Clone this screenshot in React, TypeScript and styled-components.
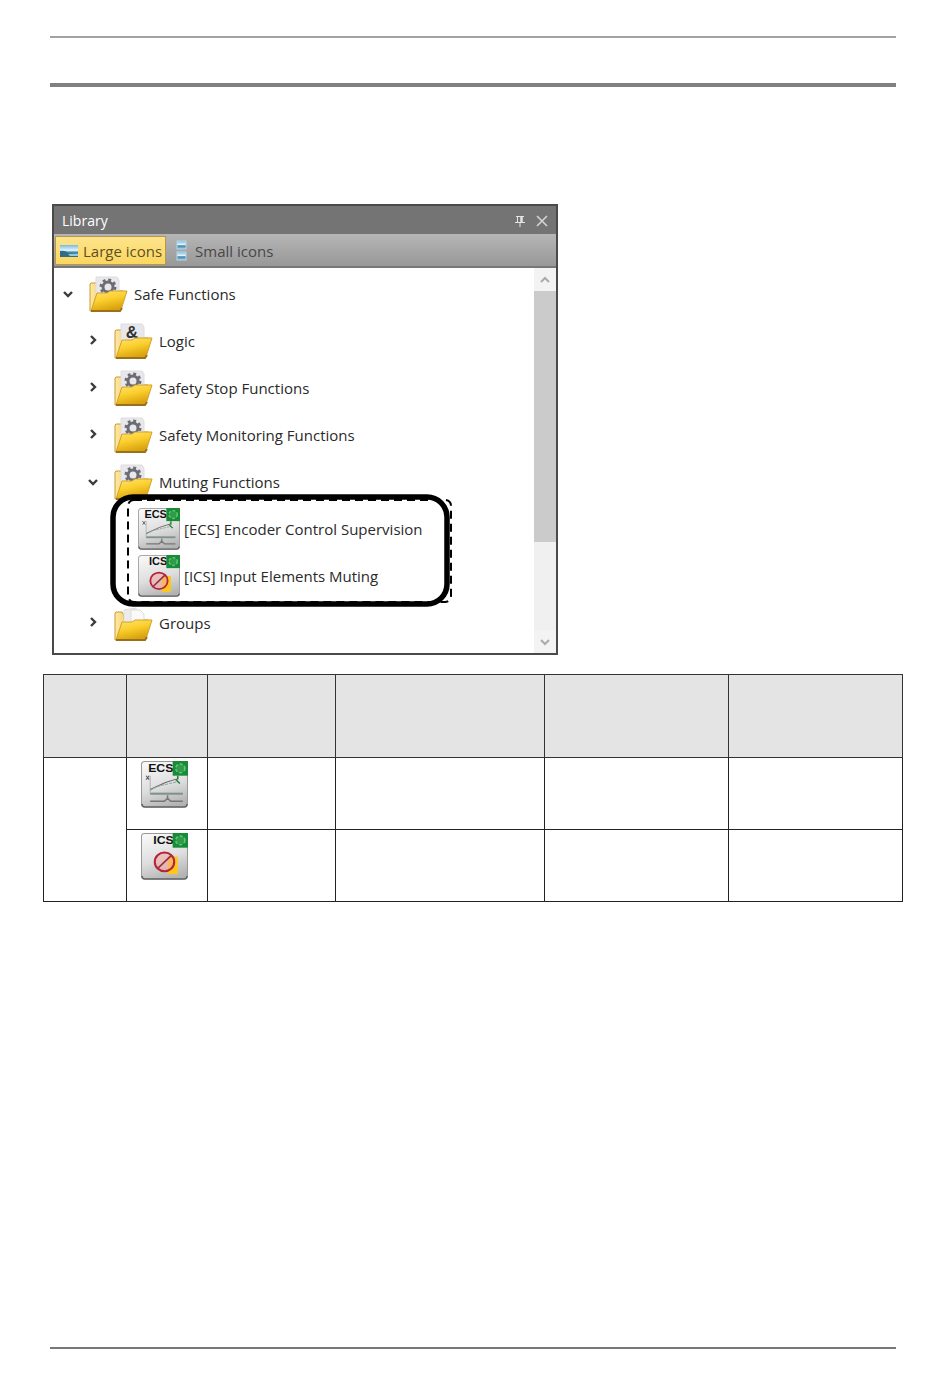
import React from "react";
import styled, { createGlobalStyle } from "styled-components";

const GlobalStyle = createGlobalStyle`
  *, *::before, *::after { box-sizing: border-box; }
  body {
    margin: 0;
    background: #fff;
    color: #2a2a2a;
    font-family: "Open Sans", "Noto Sans", sans-serif;
    font-size: 15px;
    line-height: 20px;
  }
  button { font: inherit; color: inherit; }
`;

const Page = styled.div`
  display: flex;
  flex-direction: column;
  min-height: 100vh;
  padding: 36px 47px 29px 43px;
`;

const Rule = styled.hr<{ $weight: number; $color: string }>`
  width: auto;
  margin: 0 7px;
  border: 0;
  border-top: ${(p) => p.$weight}px solid ${(p) => p.$color};
`;

const Header = styled.header`
  display: flex;
  flex-direction: column;
  gap: 45px;
`;

const Main = styled.main`
  display: flex;
  flex: 1;
  flex-direction: column;
  gap: 19px;
  padding: 117px 0 40px;
`;

const Panel = styled.section`
  width: 506px;
  max-width: 100%;
  margin-left: 9px;
  border: 2px solid #4a4a4a;
  background: #fff;
`;

const TitleBar = styled.div`
  display: flex;
  align-items: center;
  gap: 10px;
  height: 28px;
  padding: 2px 8px 0;
  background: #747474;
  color: #fff;
`;

const Title = styled.h2`
  flex: 1;
  margin: 0;
  font-size: 14px;
  font-weight: 400;
`;

const IconButton = styled.button`
  display: flex;
  align-items: center;
  justify-content: center;
  width: 12px;
  height: 16px;
  padding: 0;
  border: 0;
  background: none;
`;

const Toolbar = styled.div`
  display: flex;
  align-items: center;
  gap: 4px;
  height: 34px;
  padding: 0 1px;
  border-bottom: 2px solid #777;
  background: linear-gradient(#b6b6b6, #989898);
`;

const ModeButton = styled.button<{ $active?: boolean }>`
  display: flex;
  align-items: center;
  gap: ${(p) => (p.$active ? 4 : 7)}px;
  height: 29px;
  padding: 1px 3px 0;
  border: 1px solid ${(p) => (p.$active ? "#b8964a" : "transparent")};
  background: ${(p) => (p.$active ? "linear-gradient(#fde48c, #fbd75f)" : "none")};
  color: ${(p) => (p.$active ? "#5e5024" : "#484848")};
  white-space: nowrap;
`;

const Body = styled.div`
  display: flex;
`;

const Tree = styled.ul`
  flex: 1;
  margin: 0;
  padding: 2px 0 7px;
  list-style: none;
`;

const Branch = styled.ul`
  position: relative;
  margin: 0;
  padding: 0;
  list-style: none;
`;

const Row = styled.div<{ $level: number }>`
  display: flex;
  align-items: center;
  height: 47px;
  padding-left: ${(p) => 5 + p.$level * 25}px;
  white-space: nowrap;
`;

const Expander = styled.button`
  display: flex;
  align-items: center;
  justify-content: center;
  width: 18px;
  height: 18px;
  margin-right: 12px;
  padding: 0;
  border: 0;
  background: none;
`;

const FolderSlot = styled.span`
  display: flex;
  width: 45px;
  padding-top: 2px;
`;

const Leaf = styled.div`
  display: flex;
  align-items: center;
  gap: 4px;
  height: 47px;
  padding-left: 84px;
  white-space: nowrap;
`;

const Callout = styled.svg`
  position: absolute;
  top: -12px;
  left: 55px;
  pointer-events: none;
`;

const ScrollBar = styled.div`
  display: flex;
  flex-direction: column;
  width: 22px;
  background: #f0f0f0;
`;

const ScrollButton = styled.button`
  display: flex;
  align-items: center;
  justify-content: center;
  height: 23px;
  padding: 0;
  border: 0;
  background: #f3f3f3;
`;

const Track = styled.div`
  flex: 1;
`;

const Thumb = styled.div`
  height: 74%;
  background: #cbcbcb;
`;

const Grid = styled.table`
  width: 100%;
  table-layout: fixed;
  border: 1px solid #555;
  border-collapse: collapse;
`;

const HeadCell = styled.th`
  height: 83px;
  padding: 0;
  border: 1px solid #333;
  background: #e4e4e4;
`;

const Cell = styled.td`
  height: 72px;
  padding: 3px 4px 0 0;
  border: 1px solid #222;
  vertical-align: top;
`;

const CellIcon = styled.span`
  display: flex;
  justify-content: center;
`;

type Badge = "gear" | "and" | "pages";

function Folder({ badge }: { badge: Badge }) {
  return (
    <svg width="39" height="38" viewBox="0 0 39 38" aria-hidden="true">
      <defs>
        <linearGradient id="folderFront" x1="0" y1="0" x2="0.4" y2="1">
          <stop offset="0" stopColor="#ffe57a" />
          <stop offset="0.5" stopColor="#fbcf2e" />
          <stop offset="1" stopColor="#d9a20e" />
        </linearGradient>
        <linearGradient id="folderBack" x1="0" y1="0" x2="1" y2="0">
          <stop offset="0" stopColor="#ffe9a0" />
          <stop offset="1" stopColor="#d9a52a" />
        </linearGradient>
      </defs>
      <path d="M1 35V8l1-1h6l2 4v4h24v5l-5 15z" fill="url(#folderBack)" stroke="#c99a35" />
      {badge === "pages" ? (
        <g stroke="#ddd">
          <path d="M10 5l12-2 3 17H10z" fill="#ececec" />
          <path d="M17 5h9l4 4v14H17z" fill="#fafafa" />
        </g>
      ) : (
        <path d="M7 1h21l2 3v18H7z" fill="#e8e8ec" stroke="#ddd" />
      )}
      {badge === "gear" && (
        <g fill="none" stroke="#6c6c74">
          <circle cx="19" cy="11" r="5" strokeWidth="3" />
          <circle cx="19" cy="11" r="7" strokeWidth="3" strokeDasharray="2.8 2.7" />
        </g>
      )}
      {badge === "and" && (
        <text x="18" y="15" textAnchor="middle" fontFamily="Liberation Sans, sans-serif" fontSize="17" fontWeight="700" fill="#333">
          &amp;
        </text>
      )}
      <path d="M8 17h10l3-2h17l-6 19-1 1H2z" fill="url(#folderFront)" stroke="#d3a128" />
      <path d="M2 35h29l2-3" fill="none" stroke="#9a701c" strokeWidth="2" />
    </svg>
  );
}

function BlockIcon({ kind, size }: { kind: "ECS" | "ICS"; size: number }) {
  const isEncoder = kind === "ECS";
  return (
    <svg width={size} height={size} viewBox="0 0 46 48" preserveAspectRatio="none" role="img" aria-label={kind}>
      <defs>
        <linearGradient id="blockFace" x1="0.3" y1="0" x2="0.6" y2="1">
          <stop offset="0" stopColor="#f7f7f7" />
          <stop offset="0.55" stopColor="#dedede" />
          <stop offset="1" stopColor="#b3b3b3" />
        </linearGradient>
      </defs>
      <rect x="0.5" y="0.5" width="45" height="46.5" rx="3" fill="url(#blockFace)" stroke="#999" />
      <path d="M1 44q0 3 3 3h38q3 0 3-3" fill="none" stroke="#666" strokeWidth="1.5" />
      <text x={isEncoder ? 7 : 12} y="11" fontFamily="Liberation Sans, sans-serif" fontSize="12" fontWeight="700" fill="#111">
        {kind}
      </text>
      <rect x="31" y="0" width="15" height="15" fill="#178c35" />
      <circle cx="38.5" cy="7.5" r="4.5" fill="#2f9c49" stroke="#68c47b" strokeWidth="1.5" strokeDasharray="3 2" />
      {isEncoder ? (
        <g fill="none">
          <path d="M9 15v18h32" stroke="#b4b4b4" />
          <path d="M5 15l3 4m0-4l-3 4" stroke="#555" />
          <path d="M9 29l15-7 12-4" stroke="#666" />
          <path d="M9 30l7-4 8-2 12-3" stroke="#86a596" strokeDasharray="3 1" />
          <path d="M36 15v4m-2 0l4 4" stroke="#287b3d" strokeWidth="1.5" />
          <path d="M9 33.5h32" stroke="#7f938a" strokeWidth="2" />
          <path d="M9 41h14l3-3 3 3h12M26 35v3" stroke="#777" strokeWidth="1.5" />
        </g>
      ) : (
        <g>
          <path d="M26 24h10v18h-10z" fill="#ffc719" />
          <circle cx="23" cy="29.5" r="9.5" fill="#f4a8a0" fillOpacity="0.55" stroke="#b52438" strokeWidth="2" />
          <path d="M16.5 36L29.5 23" stroke="#98304a" strokeWidth="1.8" />
        </g>
      )}
    </svg>
  );
}

function Chevron({ open }: { open?: boolean }) {
  return (
    <svg width="12" height="12" viewBox="0 0 12 12" aria-hidden="true">
      <path d={open ? "M2 4l4 4 4-4" : "M4 1l4 4-4 4"} fill="none" stroke="#3c3c3c" strokeWidth="2.4" />
    </svg>
  );
}

function TreeRow({ label, badge, level = 1, open }: { label: string; badge: Badge; level?: number; open?: boolean }) {
  return (
    <Row $level={level}>
      <Expander aria-label={`Toggle ${label}`} aria-expanded={!!open}>
        <Chevron open={open} />
      </Expander>
      <FolderSlot>
        <Folder badge={badge} />
      </FolderSlot>
      <span>{label}</span>
    </Row>
  );
}

function ScrollArrow({ down }: { down?: boolean }) {
  return (
    <svg width="12" height="8" viewBox="0 0 12 8" aria-hidden="true">
      <path d={down ? "M2 2l4 4 4-4" : "M2 6l4-4 4 4"} fill="none" stroke="#aaa" strokeWidth="2" />
    </svg>
  );
}

function Picture({ small }: { small?: boolean }) {
  return (
    <svg width={small ? 14 : 20} height={small ? 22 : 16} viewBox={small ? "0 0 14 22" : "0 0 20 16"} aria-hidden="true">
      <defs>
        <linearGradient id="sky" x1="0" y1="0" x2="0" y2="1">
          <stop offset="0" stopColor="#79b9e2" />
          <stop offset="0.45" stopColor="#e6f5fb" />
          <stop offset="0.6" stopColor="#3f86aa" />
          <stop offset="1" stopColor="#8fc6e0" />
        </linearGradient>
      </defs>
      {small ? (
        <g fill="url(#sky)" stroke="#b4d6e6">
          <rect x="3" y="1" width="9" height="8" />
          <rect x="3" y="12" width="9" height="8" />
        </g>
      ) : (
        <g>
          <rect x="1" y="2" width="18" height="12" fill="url(#sky)" />
          <path d="M1 8q5-1 8 2l10 1v3H1z" fill="#306d82" />
          <path d="M9 11h10v2H11z" fill="#8dcbdc" />
        </g>
      )}
    </svg>
  );
}

const columns = ["9.65%", "9.42%", "14.88%", "24.42%", "21.4%", "20.23%"];

export default function App() {
  return (
    <Page>
      <GlobalStyle />
      <Header>
        <Rule $weight={2} $color="#a3a3a3" />
        <Rule $weight={4} $color="#808080" />
      </Header>
      <Main>
        <Panel>
          <TitleBar>
            <Title>Library</Title>
            <IconButton aria-label="Pin">
              <svg width="12" height="14" viewBox="0 0 12 14" fill="none" stroke="#e4e4e4" aria-hidden="true">
                <path d="M2 2.5h8M3.5 2.5v6M1 8.5h10M6 8v5" />
                <path d="M7.5 2.5v6" strokeWidth="2.5" />
              </svg>
            </IconButton>
            <IconButton aria-label="Close">
              <svg width="12" height="12" viewBox="0 0 12 12" stroke="#d4d4d4" strokeWidth="1.6" aria-hidden="true">
                <path d="M1 1l10 10M11 1L1 11" />
              </svg>
            </IconButton>
          </TitleBar>
          <Toolbar>
            <ModeButton $active aria-pressed="true">
              <Picture />
              Large icons
            </ModeButton>
            <ModeButton aria-pressed="false">
              <Picture small />
              Small icons
            </ModeButton>
          </Toolbar>
          <Body>
            <Tree>
              <li>
                <TreeRow label="Safe Functions" badge="gear" level={0} open />
                <Branch>
                  <li><TreeRow label="Logic" badge="and" /></li>
                  <li><TreeRow label="Safety Stop Functions" badge="gear" /></li>
                  <li><TreeRow label="Safety Monitoring Functions" badge="gear" /></li>
                  <li>
                    <TreeRow label="Muting Functions" badge="gear" open />
                    <Branch>
                      <li>
                        <Leaf><BlockIcon kind="ECS" size={42} />[ECS] Encoder Control Supervision</Leaf>
                      </li>
                      <li>
                        <Leaf><BlockIcon kind="ICS" size={42} />[ICS] Input Elements Muting</Leaf>
                      </li>
                      <Callout width="344" height="116" viewBox="0 0 344 116" fill="none" stroke="#000" aria-hidden="true">
                        <rect x="4" y="4" width="334" height="107" rx="20" strokeWidth="5.5" />
                        <rect x="19" y="7" width="323" height="102" rx="6" strokeWidth="2" strokeDasharray="8 5" />
                      </Callout>
                    </Branch>
                  </li>
                  <li><TreeRow label="Groups" badge="pages" /></li>
                </Branch>
              </li>
            </Tree>
            <ScrollBar>
              <ScrollButton aria-label="Scroll up"><ScrollArrow /></ScrollButton>
              <Track><Thumb /></Track>
              <ScrollButton aria-label="Scroll down"><ScrollArrow down /></ScrollButton>
            </ScrollBar>
          </Body>
        </Panel>
        <Grid>
          <colgroup>
            {columns.map((width, i) => <col key={i} width={width} />)}
          </colgroup>
          <thead>
            <tr>{columns.map((_, i) => <HeadCell key={i} />)}</tr>
          </thead>
          <tbody>
            <tr>
              <Cell rowSpan={2} />
              <Cell><CellIcon><BlockIcon kind="ECS" size={47} /></CellIcon></Cell>
              <Cell /><Cell /><Cell /><Cell />
            </tr>
            <tr>
              <Cell><CellIcon><BlockIcon kind="ICS" size={47} /></CellIcon></Cell>
              <Cell /><Cell /><Cell /><Cell />
            </tr>
          </tbody>
        </Grid>
      </Main>
      <Rule $weight={2} $color="#777" />
    </Page>
  );
}
